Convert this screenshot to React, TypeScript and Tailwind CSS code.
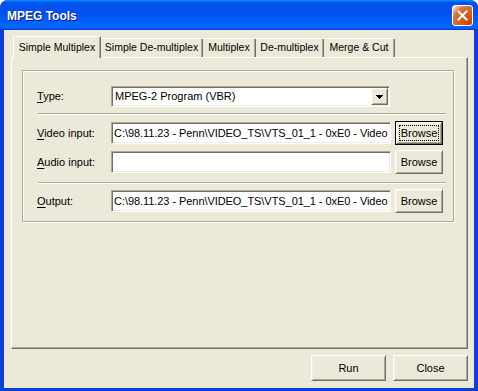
import React from "react";

const raised =
  "bg-[#ECE9D8] border border-t-white border-l-white border-r-[#716F64] border-b-[#716F64] shadow-[inset_1px_1px_0_#F1EFE2,inset_-1px_-1px_0_#ACA899]";
const sunken =
  "bg-white border border-t-[#ACA899] border-l-[#ACA899] border-r-white border-b-white shadow-[inset_1px_1px_0_#716F64,inset_-1px_-1px_0_#F1EFE2]";

function Label({ u, rest }: { u: string; rest: string }) {
  return (
    <div className="w-[74px] shrink-0 leading-[13px]">
      <span className="underline underline-offset-[2px] decoration-[1px]">{u}</span>
      {rest}
    </div>
  );
}

function Browse({ focused }: { focused?: boolean }) {
  if (focused) {
    return (
      <div className="w-[48px] h-[24px] border border-black flex">
        <div className={`${raised} flex-1 flex items-center justify-center`}>
          <span className="border border-dotted border-black px-[1px] leading-[14px]">Browse</span>
        </div>
      </div>
    );
  }
  return (
    <div className={`${raised} w-[48px] h-[24px] flex items-center justify-center`}>
      <span className="leading-[14px]">Browse</span>
    </div>
  );
}

function Field({ value }: { value?: string }) {
  return (
    <div className={`${sunken} w-[280px] h-[22px] mr-[4px] flex items-center pl-[2px] overflow-hidden whitespace-nowrap tracking-[-0.06px]`}>
      {value}
    </div>
  );
}

function Separator() {
  return <div className="w-[408px] ml-[1px] h-[2px] border-t border-t-[#ACA899] border-b border-b-white" />;
}

const tabs = [
  { t: "Simple De-multiplex", w: "w-[102px]" },
  { t: "Multiplex", w: "w-[53px]" },
  { t: "De-multiplex", w: "w-[68px]" },
  { t: "Merge & Cut", w: "w-[71px]" },
];

const path = "C:\\98.11.23 - Penn\\VIDEO_TS\\VTS_01_1 - 0xE0 - Video";

export default function App() {
  return (
    <div
      className="w-[478px] h-[391px] flex flex-col rounded-t-[8px] overflow-hidden bg-[#0B3FDB] text-[11px] text-black"
      style={{ fontFamily: '"Liberation Sans", Arial, sans-serif' }}
    >
      {/* Title bar */}
      <div className="h-[30px] shrink-0 flex items-center pl-[7px] pr-[5px] bg-[linear-gradient(180deg,#0997ff,#0053ee_8%,#0050ee_40%,#06f_88%,#06f_93%,#005bff_95%,#003dd7_96%,#003dd7)]">
        <div className="flex-1 pt-px text-white font-bold text-[12px] [text-shadow:1px_1px_#0F1089]">MPEG Tools</div>
        <div className="w-[21px] h-[21px] rounded-[3px] border border-white flex items-center justify-center bg-[radial-gradient(circle_at_90%_90%,#cc4600_0%,#dc6527_55%,#cd7546_70%,#ffccb2_90%,#fff_100%)]">
          <svg width="11" height="11" viewBox="0 0 11 11">
            <path d="M1.5 1.5 L9.5 9.5 M9.5 1.5 L1.5 9.5" stroke="white" strokeWidth="2" strokeLinecap="square" />
          </svg>
        </div>
      </div>

      {/* Client */}
      <div className="flex-1 mx-[4px] mb-[4px] bg-[#ECE9D8] flex flex-col pt-[6px] pb-[6px] pl-[7px] pr-[6px] border-b border-b-[#ECE9D8]">
        {/* Tabs */}
        <div className="h-[21px] flex items-end pl-[2px]">
          <div className="relative z-10 w-[88px] h-[22px] -mb-px bg-[#ECE9D8] border-t border-l border-t-white border-l-white border-r border-r-[#716F64] rounded-tl-[2px] rounded-tr-[2px] shadow-[inset_-1px_0_0_#ACA899] flex items-start justify-center pt-[3px] text-[10.5px]">
            Simple Multiplex
          </div>
          {tabs.map((tab) => (
            <div
              key={tab.t}
              className={`${tab.w} h-[19px] border-t border-t-white border-r border-r-[#716F64] rounded-tr-[2px] shadow-[inset_-1px_0_0_#ACA899] flex items-center justify-center text-[10.5px] whitespace-nowrap`}
            >
              {tab.t}
            </div>
          ))}
        </div>

        {/* Panel */}
        <div className="h-[292px] border border-t-white border-l-white border-r-[#716F64] border-b-[#716F64] shadow-[inset_-1px_-1px_0_#ACA899] pt-[12px] pl-[10px]">
          <div className="w-[432px] h-[152px] border border-[#ACA899] shadow-[inset_1px_1px_0_#fff,1px_1px_0_#fff] pt-[15px] pl-[14px] pb-[8px] flex flex-col">
            <div className="h-[21px] flex items-center">
              <Label u="T" rest="ype:" />
              <div className={`${sunken} w-[279px] h-[21px] flex items-center p-px`}>
                <div className="flex-1 pl-[2px] leading-[17px] whitespace-nowrap">MPEG-2 Program (VBR)</div>
                <div className={`${raised} w-[17px] h-[17px] flex items-center justify-center`}>
                  <svg width="7" height="4" viewBox="0 0 7 4" shapeRendering="crispEdges">
                    <rect x="0" y="0" width="7" height="1" fill="black" />
                    <rect x="1" y="1" width="5" height="1" fill="black" />
                    <rect x="2" y="2" width="3" height="1" fill="black" />
                    <rect x="3" y="3" width="1" height="1" fill="black" />
                  </svg>
                </div>
              </div>
            </div>
            <div className="mt-[6px]">
              <Separator />
            </div>
            <div className="mt-[6px] h-[24px] flex items-center">
              <Label u="V" rest="ideo input:" />
              <Field value={path} />
              <Browse focused />
            </div>
            <div className="mt-[5px] h-[24px] flex items-center">
              <Label u="A" rest="udio input:" />
              <Field />
              <Browse />
            </div>
            <div className="mt-[8px]">
              <Separator />
            </div>
            <div className="mt-[5px] h-[24px] flex items-center">
              <Label u="O" rest="utput:" />
              <Field value={path} />
              <Browse />
            </div>
          </div>
        </div>

        {/* Bottom buttons */}
        <div className="mt-[6px] h-[26px] flex justify-end gap-[7px]">
          <div className={`${raised} w-[75px] h-[26px] flex items-center justify-center`}>Run</div>
          <div className={`${raised} w-[75px] h-[26px] flex items-center justify-center`}>Close</div>
        </div>
      </div>
    </div>
  );
}
